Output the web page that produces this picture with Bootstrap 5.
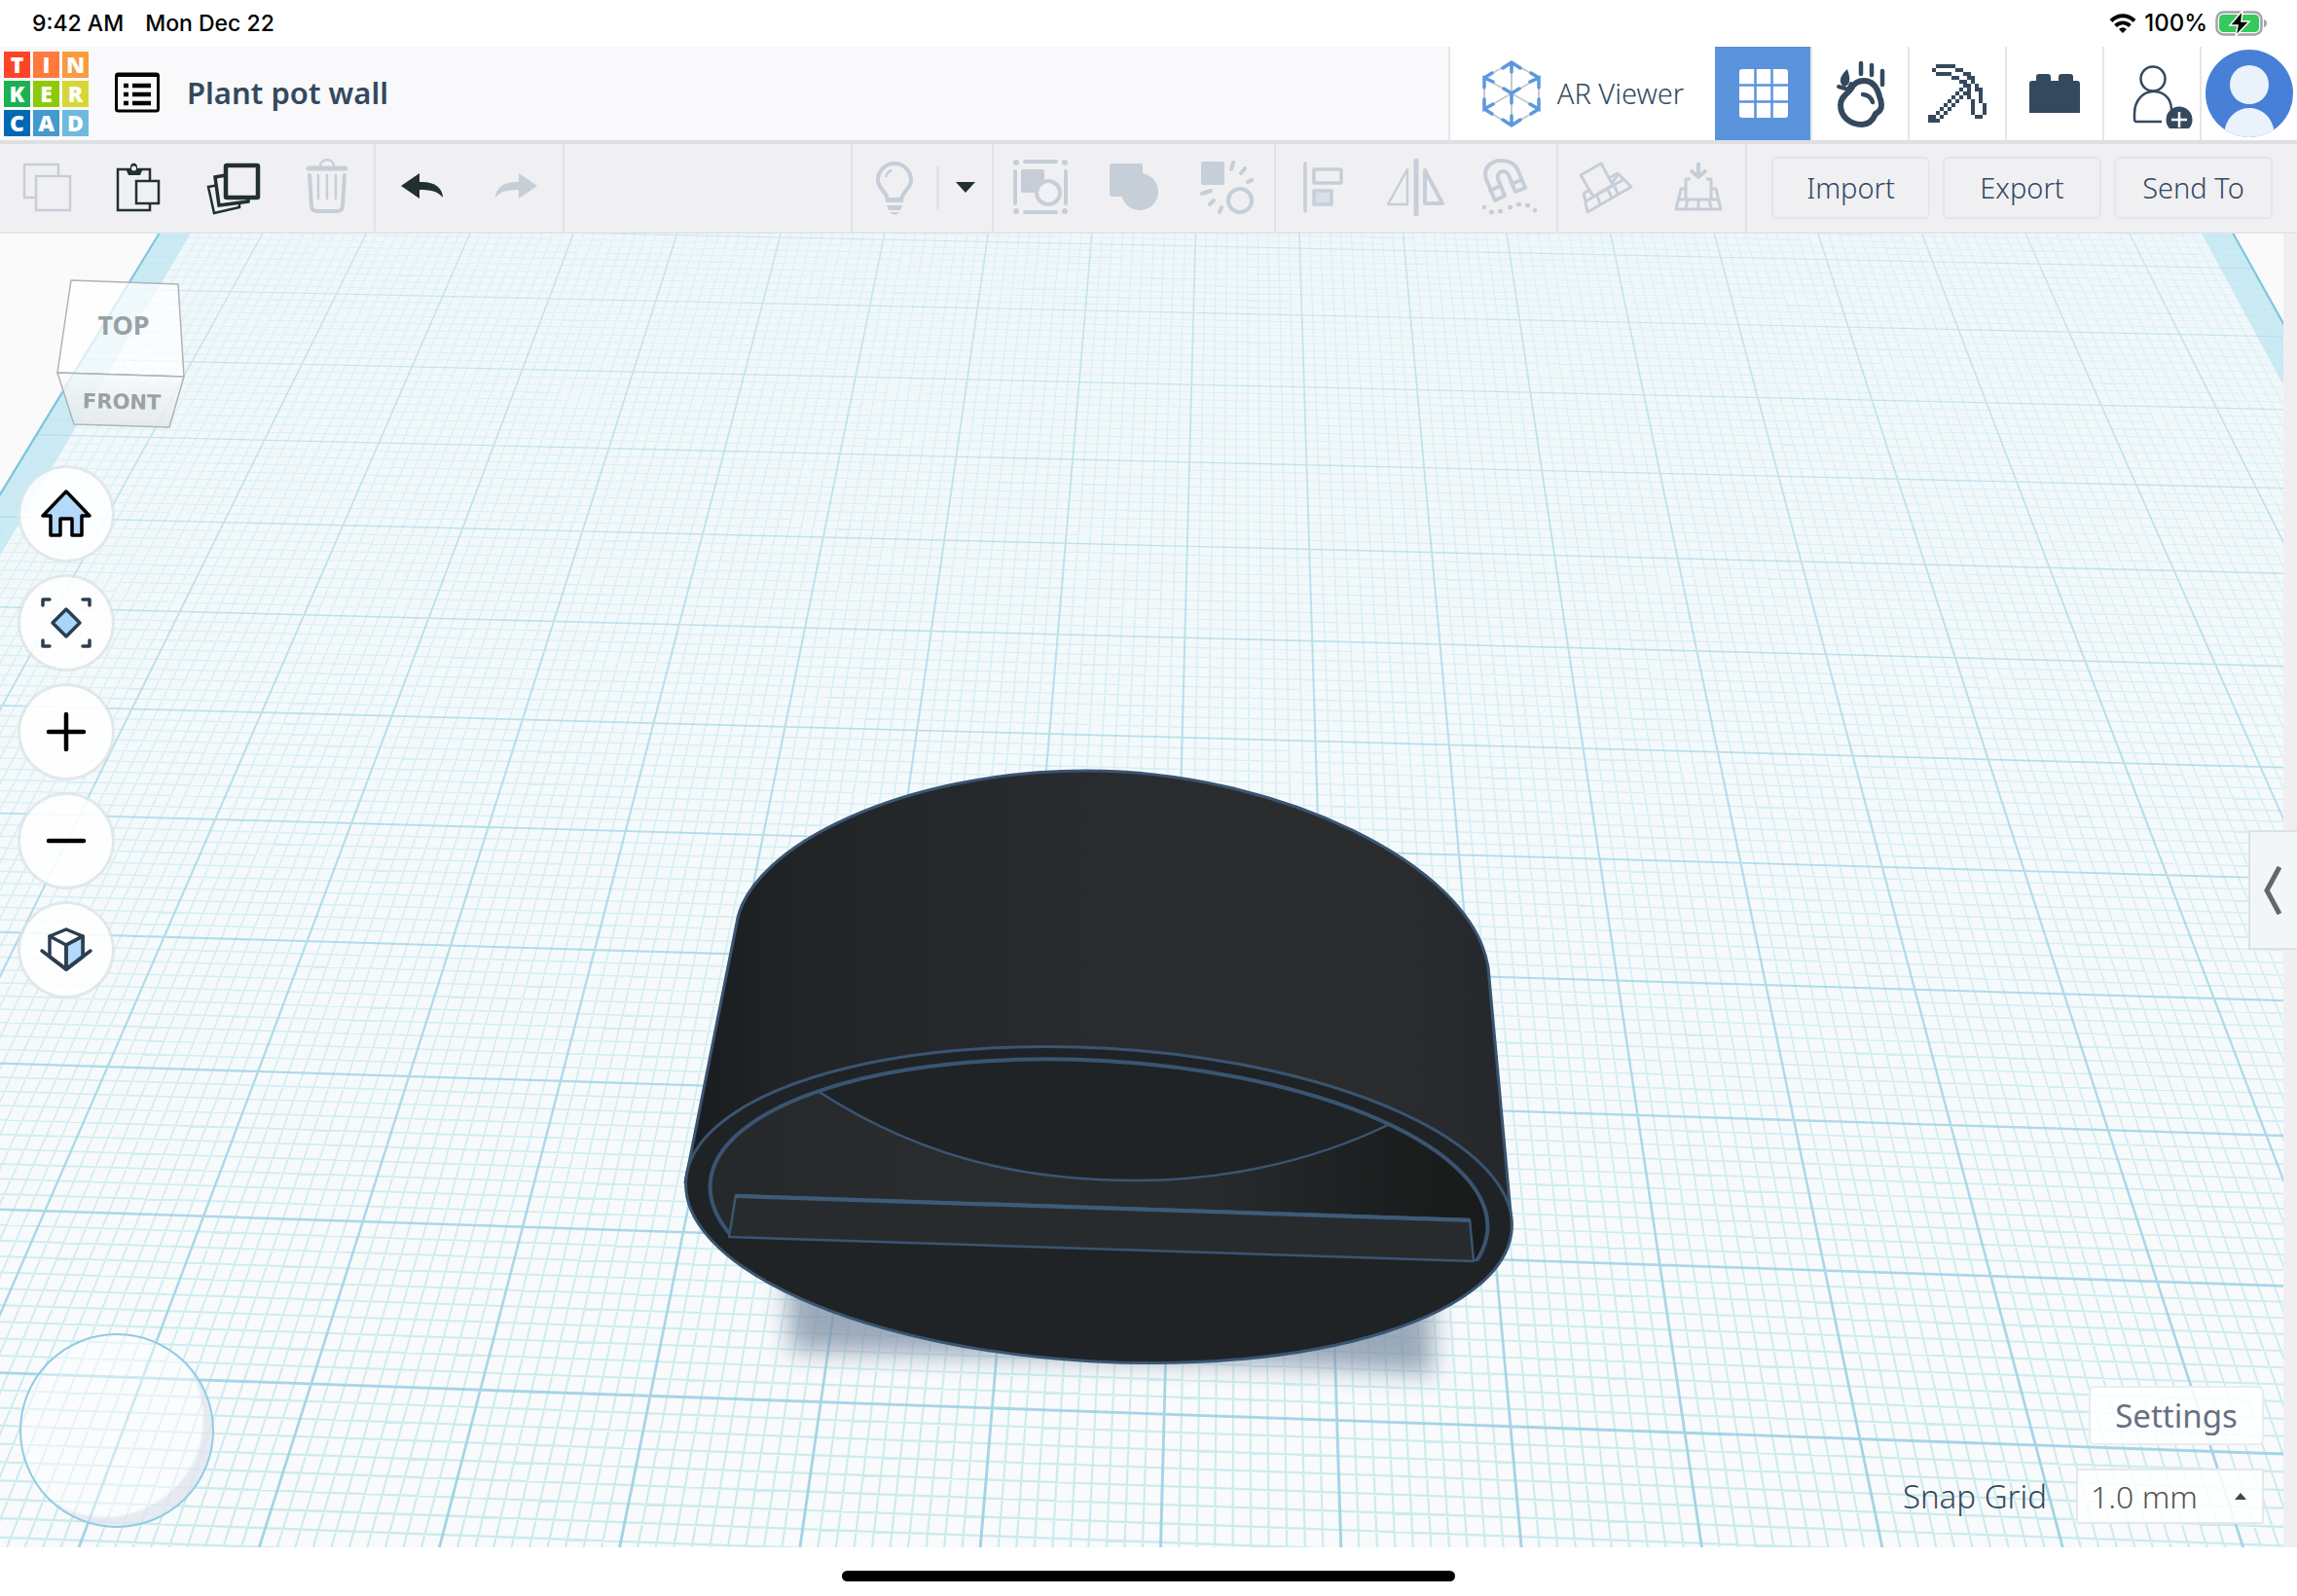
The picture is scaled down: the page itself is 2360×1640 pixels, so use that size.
<!DOCTYPE html>
<html lang="en">
<head>
<meta charset="utf-8">
<meta name="viewport" content="width=device-width, initial-scale=1">
<title>Plant pot wall | Tinkercad</title>
<link href="https://cdn.jsdelivr.net/npm/bootstrap@5.3.0/dist/css/bootstrap.min.css" rel="stylesheet">
<style>
:root{--ink:#34495e;--dark:#22302f;--off:#c6ced8;--bar:#f0f0f3;--line:#dfe2e6}
body{font-family:"Noto Sans","Open Sans",sans-serif;color:var(--ink);background:#fff;overflow:hidden}
svg{display:block;flex:none}
button{background:none;border:0;padding:0;color:inherit}
.status{height:48px;padding:0 30px 0 33px;font:500 23px/32px Inter,sans-serif;color:#000;gap:22px}
.status .power{font-size:24px}
.topbar{height:96px;background:#f9f9fb}
.logo{display:grid;grid-template-columns:repeat(3,27px);grid-template-rows:repeat(3,27px);gap:3px;margin-left:4px;text-decoration:none}
.logo span{color:#fff;font:800 23px/27px "Open Sans",sans-serif;text-align:center}
.design-name{font-size:31px;font-weight:600;line-height:40px;margin:0 0 2px 28px}
.menu-btn{margin:0 0 2px 27px}
.tile{width:100px;height:96px;background:#fff;border-left:2px solid #e4e6ea;display:flex;align-items:center;justify-content:center}
.tile.ar{width:274px;gap:16px;font-size:29px;font-weight:300}
.tile.on{width:98px;background:#5b93dc;border-color:#5b93dc}
.tools{height:96px;background:var(--bar);border-top:4px solid #dedfe3;border-bottom:2px solid #e1e5e9}
.tool-group{border-right:2px solid var(--line);height:100%}
.tool{width:96px;height:100%;display:flex;align-items:center;justify-content:center;color:var(--dark)}
.tool:disabled{color:var(--off)}
.spacer{min-width:0}
.action{width:163px;height:64px;border:2px solid #e3e6ea;border-radius:6px;font-size:29px;font-weight:300;line-height:36px}
.actions{gap:13px;padding:0 25px}
.rail{width:14px;background:#efeff2}
.cube{position:absolute;left:54px;top:44px}
.cube text{font-family:"DejaVu Sans",sans-serif;font-weight:700;fill:#98a1a6;text-anchor:middle}
.cube .face-top{font-family:"Noto Sans",sans-serif;font-size:27px}
.cube .face-front{font-size:21px}
.nav-stack{position:absolute;left:18px;top:238px;gap:12px}
.round{width:100px;height:100px;border-radius:50%;background:rgba(255,255,255,.86);border:3px solid rgba(222,228,231,.8);background-clip:padding-box;display:flex;align-items:center;justify-content:center}
.stick{position:absolute;left:20px;bottom:20px;width:200px;height:200px;border-radius:50%;border:2px solid #92cbe3;background:rgba(255,255,255,.45);box-shadow:inset -12px -12px 2px -3px rgba(212,218,230,.5)}
.corner{position:absolute;right:34px;bottom:24px;gap:24px;font-size:33px;font-weight:300;line-height:40px}
.settings{width:180px;height:61px;background:rgba(255,255,255,.86);border:2px solid #e9edf0;border-radius:6px;color:#667080}
.snap{gap:30px}
.snap-box{position:relative}
.snap-box select{appearance:none;width:193px;height:57px;border:2px solid #e4e8eb;border-radius:2px;background:rgba(255,255,255,.86);padding:0 13px;color:#555;font-size:32px;font-weight:300}
.snap-box svg{position:absolute;right:18px;top:25px;pointer-events:none}
.drawer{position:absolute;right:0;top:613px;width:50px;height:123px;background:#f2f6f8;border:2px solid #dbe1e5;border-right:0;display:flex;align-items:center;justify-content:center}
.home-bar{height:50px;background:#fff;padding-top:9px}
.home-bar span{width:630px;height:11px;border-radius:6px;background:#000}
</style>
<script src="https://cdn.jsdelivr.net/npm/bootstrap@5.3.0/dist/js/bootstrap.bundle.min.js"></script>
</head>
<body class="d-flex flex-column vh-100">
<div class="status d-flex align-items-center flex-shrink-0">
  <span>9:42 AM</span><span>Mon Dec 22</span>
  <div class="power ms-auto d-flex align-items-center gap-2">
    <svg width="28" height="22" viewBox="0 0 28 22" fill="none" stroke="#000" stroke-width="4"><path d="M2 8.500C9 1.500 19 1.500 26 8.500M6.500 13.500C11 9.500 17 9.500 21.500 13.500"/><path d="M14 21L10 17Q14 13.500 18 17Z" fill="#000" stroke="none"/></svg>
    <span>100%</span>
    <svg width="54" height="26" viewBox="0 0 54 26"><rect x="1.500" y="1.500" width="46" height="23" rx="7" fill="none" stroke="#a2a4a6" stroke-width="2.500"/><path d="M50 9Q53 10 53 13T50 17Z" fill="#a2a4a6"/><rect x="4" y="4" width="41" height="18" rx="4.500" fill="#35ca5b"/><path d="M28 0L15 15H23L21 26L35 11H27Z" fill="#000" stroke="#fff" stroke-width="1.500"/></svg>
  </div>
</div>

<header class="topbar d-flex align-items-center flex-shrink-0">
  <a class="logo" href="#" aria-label="Tinkercad">
    <span style="background:#fc4528">T</span><span style="background:#ff7a3c">I</span><span style="background:#f79c3f">N</span>
    <span style="background:#1bb052">K</span><span style="background:#8dca08">E</span><span style="background:#d6d736">R</span>
    <span style="background:#0268b6">C</span><span style="background:#4499cd">A</span><span style="background:#6db9df">D</span>
  </a>
  <button class="menu-btn" aria-label="Designs"><svg width="46" height="42" viewBox="0 0 46 42"><rect x="1.500" y="2" width="43" height="38" rx="2" fill="none" stroke="#000" stroke-width="3"/><path d="M1 1H45V5H1Z"/><path d="M9 14h5M18 14h19M9 23h5M18 23h19M9 32h5M18 32h19" stroke="#000" stroke-width="4.500"/></svg></button>
  <h1 class="design-name">Plant pot wall</h1>
  <nav class="d-flex ms-auto">
    <button class="tile ar">
      <svg width="62" height="72" viewBox="3 0 62 72" fill="none"><path d="M34 4L6 20V52L34 69L62 52V20ZM34 4V69M6 20L62 52M62 20L6 52" stroke="#c9c9cb" stroke-width="2"/><path d="M25 10L34 4L43 10M34 4V14M25 63L34 69L43 63M34 69V59M6 30V20L15 24M6 20L14 15M6 42V52L15 47M6 52L14 57M62 30V20L53 24M62 20L54 15M62 42V52L53 47M62 52L54 57M26 31L34 36L42 31M34 36V46" stroke="#5c98df" stroke-width="3.500" stroke-linecap="round"/></svg>
      <span>AR Viewer</span>
    </button>
    <button class="tile on" aria-label="3D editor"><svg width="50" height="50" viewBox="0 0 50 50"><rect width="50" height="50" rx="3" fill="#fff"/><path d="M16.500 0V50M33.500 0V50M0 16.500H50M0 33.500H50" stroke="#5b93dc" stroke-width="2.500"/></svg></button>
    <button class="tile" aria-label="Simulation"><svg width="58" height="72" viewBox="-4 0 58 72" fill="none" stroke="#34495e" stroke-linecap="round"><path d="M29 23C39 23 43 31 45 39C49 49 47 54 41 57C38 64 34 68 27 68C14 68 5 59 5 48C5 39 13 36 16 31C19 25 23 23 29 23Z" stroke-width="6"/><path d="M26 5V16M37 7V17M48 13V27" stroke-width="4.500"/><path d="M28 37Q36 38 38 45" stroke-width="4.500"/><path d="M12 11Q0 22 8 29Q18 28 12 11Z" fill="#34495e" stroke="none"/><path d="M3 29L13 32L16 26" stroke-width="4"/></svg></button>
    <button class="tile" aria-label="Blocks"><svg id="pickaxe" width="60" height="60" viewBox="0 0 15 15" fill="#34495e" shape-rendering="crispEdges"></svg></button>
    <button class="tile" aria-label="Bricks"><svg width="52" height="40" viewBox="0 0 52 40" fill="#34495e"><path d="M0 10Q0 7 3 7H7V3Q7 0 10 0H19Q22 0 22 3V7H30V3Q30 0 33 0H42Q45 0 45 3V7H49Q52 7 52 10V40H0Z"/></svg></button>
    <button class="tile" aria-label="Invite people"><svg width="84" height="72" viewBox="-21 -3 84 72" fill="none" stroke="#34495e" stroke-width="2.500"><circle cx="22" cy="18" r="12.500"/><path d="M31 62H5Q3 62 3 59V54C3 24 41 24 41 50"/><circle cx="49" cy="60" r="13.500" fill="#34495e" stroke="none"/><path d="M49 52V68M41 60H57" stroke="#fff"/></svg></button>
    <button class="tile" aria-label="Account"><svg width="90" height="90" viewBox="0 0 90 90"><clipPath id="disc"><circle cx="45" cy="45" r="45"/></clipPath><g clip-path="url(#disc)"><path fill="#4880d7" d="M0 0H90V90H0Z"/><g fill="#eaf2fc"><circle cx="45" cy="36" r="20"/><path d="M19 90C19 50 71 50 71 90Z"/></g></g></svg></button>
  </nav>
</header>

<div class="tools d-flex flex-shrink-0" role="toolbar" aria-label="Editing">
  <div class="tool-group d-flex">
    <button class="tool" disabled aria-label="Copy"><svg width="60" height="60" fill="#f0f0f3" stroke="currentColor" stroke-width="2.500"><path d="M7 6H42V40H7Z"/><path d="M19 18H54V53H19Z"/></svg></button>
    <button class="tool" aria-label="Paste"><svg width="60" height="60" viewBox="-2 0 60 60" fill="#f0f0f3" stroke="currentColor" stroke-width="2.500"><path d="M5 11H38V53H5Z"/><path d="M13 10H18C17 3 26 3 25 10H31L28 17H16Z" fill="currentColor" stroke="none"/><circle cx="21.500" cy="10" r="2.500" stroke="none"/><path d="M24 23H47V46H24Z"/></svg></button>
    <button class="tool" aria-label="Duplicate"><svg width="60" height="60" fill="#f0f0f3" stroke="currentColor"><path d="M15 27L4 29L10 56L36 50V44" stroke-width="2.500"/><path d="M22 17L11 19L15 48L45 44V38" stroke-width="3.500"/><rect x="22" y="7" width="33" height="33" rx="1" stroke-width="4.500"/></svg></button>
    <button class="tool" disabled aria-label="Delete"><svg width="60" height="60" fill="none" stroke="currentColor" stroke-linecap="round"><path d="M11 10H49" stroke-width="5"/><path d="M23 8C23-1 37-1 37 8" stroke-width="2.500"/><path d="M12 17L14 48Q14 54 20 54H40Q46 54 46 48L48 17" stroke-width="4"/><path d="M21 17V41M30 17V41M39 17V41" stroke-width="2.500"/></svg></button>
  </div>
  <div class="tool-group d-flex">
    <button class="tool" aria-label="Undo"><svg width="60" height="60" fill="currentColor"><path d="M8 28L27 15V24C42 23 51 30 51 40C46 34 40 32 27 32V41Z"/></svg></button>
    <button class="tool" disabled aria-label="Redo"><svg width="60" height="60" fill="currentColor"><path d="M52 28L33 15V24C18 23 9 30 9 40C14 34 20 32 33 32V41Z"/></svg></button>
  </div>
  <div class="tool-group spacer flex-grow-1"></div>
  <div class="tool-group d-flex">
    <button class="tool" style="width:86px" disabled aria-label="Show all"><svg width="60" height="60" fill="none" stroke="currentColor"><path d="M23 42C21 32 13 31 13 22A17 17 0 0 1 47 22C47 31 39 32 37 42Z" stroke-width="4"/><path d="M21 43H39" stroke-width="4"/><path d="M22 48H38L36 53H24ZM25 55H35Q30 60 25 55Z" fill="currentColor" stroke="none"/><path d="M21 19Q22 14 27 12" stroke-width="2.500"/></svg></button>
    <span class="align-self-center border-start border-3 opacity-75" style="height:44px"></span>
    <button class="tool" style="width:54px" aria-label="Visibility menu"><svg width="20" height="12" fill="currentColor"><path d="M0 0H20L10 11Z"/></svg></button>
  </div>
  <div class="tool-group d-flex">
    <button class="tool" disabled aria-label="Bounding group"><svg width="60" height="60" stroke="currentColor" fill="none" stroke-linecap="round"><g fill="currentColor" stroke="none"><circle cx="5" cy="4" r="3"/><circle cx="55" cy="4" r="3"/><circle cx="5" cy="54" r="3"/><circle cx="55" cy="54" r="3"/><rect x="10" y="11" width="24" height="24" rx="2" fill="#c8ccd9"/></g><path d="M14 3H46M14 55H46M4 13V46M56 13V46" stroke-width="4"/><circle cx="38" cy="35" r="12" fill="#eff2f6" stroke-width="4"/></svg></button>
    <button class="tool" disabled aria-label="Group"><svg width="60" height="60" fill="currentColor"><rect x="5" y="5" width="34" height="34" rx="2"/><circle cx="36" cy="34" r="19"/></svg></button>
    <button class="tool" disabled aria-label="Ungroup"><svg width="60" height="60" stroke="currentColor" fill="none" stroke-width="4" stroke-linecap="round"><rect x="3" y="3" width="24" height="24" rx="2" fill="currentColor" stroke="none"/><circle cx="43" cy="43" r="12"/><path d="M36 4L34 11M48 10L44 15M55 22L51 24M4 36L13 33M16 43L12 47M24 50L22 55"/></svg></button>
  </div>
  <div class="tool-group d-flex">
    <button class="tool" disabled aria-label="Align"><svg width="60" height="60" stroke="currentColor" fill="none" stroke-width="3.500" stroke-linejoin="round"><path d="M12 5V54" stroke-linecap="round"/><path d="M21 11H49V25H21Z"/><path d="M21 33H39V47H21Z" fill="#d8dfe8"/></svg></button>
    <button class="tool" disabled aria-label="Mirror"><svg width="60" height="60" stroke="currentColor" fill="none" stroke-linejoin="round"><path d="M21 11V47H1Z" stroke-width="2.500"/><path d="M30 2V57" stroke-width="5" stroke-linecap="round"/><path d="M39 12V46H57Z" stroke-width="4"/></svg></button>
    <button class="tool" disabled aria-label="Cruise"><svg width="60" height="60" stroke="currentColor" fill="none" stroke-width="4" stroke-linejoin="round" stroke-linecap="round"><path d="M15 43L6 21C2 9 12 2 21 2C31 2 37 7 39 13L46 30L36 34L29 17C26 10 16 13 18 21L25 38ZM10 33L20 28M32 26L42 22"/><path d="M4 50h0M11 55h1M20 54h1M30 50h1M39 47h1M48 48h1M56 53h0" stroke-width="4.500"/></svg></button>
  </div>
  <div class="tool-group d-flex">
    <button class="tool" disabled aria-label="Workplane"><svg width="60" height="60" stroke="currentColor" fill="none" stroke-width="3" stroke-linejoin="round"><path d="M26 5L5 17L18 39L38 27ZM8 35L12 55L57 29L43 15L34 20M8 35L14 33M10 44L48 22M22 38L25 47M33 32L37 40M43 17L38 24L43 36"/></svg></button>
    <button class="tool" disabled aria-label="Drop to workplane"><svg width="60" height="60" stroke="currentColor" fill="none" stroke-width="3" stroke-linejoin="round"><path d="M30 4V18M22 12L30 19L38 12" stroke-width="4"/><path d="M22 21H17V42H43V21H38M17 31H12L7 52H53L48 31H43M10 42H17M43 42H50M19 42L17 51M30 42V51M41 42L43 51"/></svg></button>
  </div>
  <div class="actions d-flex align-items-center">
    <button class="action">Import</button><button class="action">Export</button><button class="action">Send To</button>
  </div>
</div>

<main class="d-flex flex-grow-1 position-relative overflow-hidden">
  <div class="flex-grow-1 position-relative">
    <svg id="scene" class="position-absolute w-100 h-100" viewBox="0 240 2346 1350" preserveAspectRatio="xMidYMid slice" role="img" aria-label="Workplane with pot">
      <defs>
        <linearGradient id="haze" x1="0" x2="0" y1="240" y2="1590" gradientUnits="userSpaceOnUse"><stop stop-color="#e9f5f9" stop-opacity=".6"/><stop offset=".45" stop-color="#f0f8fb" stop-opacity=".4"/><stop offset="1" stop-color="#fafbfc" stop-opacity=".1"/></linearGradient>
        <linearGradient id="fade" x1="0" x2="0" y1="240" y2="1590" gradientUnits="userSpaceOnUse"><stop stop-color="#a9d8e6" stop-opacity=".55"/><stop offset=".5" stop-color="#a3d5e6" stop-opacity=".8"/><stop offset="1" stop-color="#9ed1e4" stop-opacity=".95"/></linearGradient>
        <linearGradient id="wall"><stop stop-color="#181c1e"/><stop offset=".12" stop-color="#202427"/><stop offset=".3" stop-color="#25282b"/><stop offset=".5" stop-color="#292c2e"/><stop offset=".85" stop-color="#2a2c2e"/><stop offset="1" stop-color="#25282b"/></linearGradient>
        <linearGradient id="bore"><stop stop-color="#25282a"/><stop offset=".35" stop-color="#2a2c2e"/><stop offset=".65" stop-color="#272a2c"/><stop offset=".85" stop-color="#1b1e1e"/><stop offset="1" stop-color="#181a1a"/></linearGradient>
        <filter id="soft" x="-10%" y="-50%" width="120%" height="200%"><feGaussianBlur stdDeviation="12"/></filter>
        <clipPath id="above"><path d="M600 1000H1700V1302L1514 1296L749 1271L600 1266Z"/></clipPath>
        <clipPath id="hole"><ellipse cx="1129" cy="1240" rx="400" ry="150" transform="rotate(3.4 1129 1240)"/></clipPath>
      </defs>
      <rect y="240" width="2346" height="1350" fill="#fafafa"/>
      <path id="plane" fill="#f8fafb"/>
      <path id="minor" fill="#c6e9ed"/>
      <path id="haze-plane" fill="url(#haze)"/>
      <path id="band" fill="#b5e2f1" fill-opacity=".62"/>
      <path id="major" fill="url(#fade)"/>
      <path id="edge" fill="#7cc6de"/>
      <path d="M808 1300L1472 1330L1472 1412L1300 1402L812 1388Z" fill="#7d8fa5" opacity=".75" filter="url(#soft)"/>
      <g stroke="#3a5571" stroke-width="3" stroke-linejoin="round">
        <path d="M704 1215L757 948C770 869 930 792 1116 792C1310 792 1512 887 1529 994L1553 1257Z" fill="url(#wall)"/>
        <ellipse cx="1129" cy="1238" rx="425" ry="161" transform="rotate(3.300 1129 1238)" fill="#1f2326"/>
        <g clip-path="url(#above)"><g clip-path="url(#hole)" stroke-width="2.500">
          <rect x="700" y="1060" width="860" height="260" fill="url(#bore)" stroke="none"/>
          <path d="M815 1104C935 1190 1050 1213 1168 1213C1270 1213 1365 1188 1440 1149L1400 1040H800Z" fill="#1f2326"/>
        </g>
        <ellipse cx="1129" cy="1240" rx="400" ry="150" transform="rotate(3.400 1129 1240)" fill="none" stroke-width="4"/></g>
        <path d="M756 1228L1510 1253L1514 1296L749 1271Z" fill="#282b2d" stroke-width="2.500"/>
        <path d="M756 1229L1510 1254" stroke="#3d5c7b" stroke-width="4"/>
      </g>
    </svg>
    <button class="cube" aria-label="View cube"><svg width="140" height="160" viewBox="54 284 140 160"><defs><linearGradient id="face" x1="0" x2="0" y1="0" y2="1"><stop stop-color="#fbfcfc"/><stop offset="1" stop-color="#e3e7e8"/></linearGradient></defs><g stroke="#adb4b7" stroke-width="1.500" stroke-linejoin="round"><path d="M73 288L183 292L189 387L59 383Z" fill="#fff" fill-opacity=".7"/><path d="M59 383L189 387L174 439L76 436Z" fill="url(#face)" fill-opacity=".8"/></g><text class="face-top" x="127" y="344">TOP</text><text class="face-front" x="125" y="420" transform="rotate(1 125 420)">FRONT</text></svg></button>
    <div class="nav-stack d-flex flex-column">
      <button class="round" aria-label="Home view"><svg width="56" height="56" fill="#b3dafb" stroke="#000" stroke-width="3.500" stroke-linejoin="round"><path d="M28 5L4 30H12V50H22V33H34V50H44V30H52Z"/></svg></button>
      <button class="round" aria-label="Fit view"><svg width="56" height="56" fill="none" stroke="#2c3e50" stroke-width="3.500" stroke-linecap="round" stroke-linejoin="round"><path d="M28 14L42 28L28 42L14 28Z" fill="#a9d5fb"/><path d="M4 10V4H11M45 4H52V10M4 46V52H11M45 52H52V46"/></svg></button>
      <button class="round" aria-label="Zoom in"><svg width="56" height="56" stroke="#000" stroke-width="4.500" stroke-linecap="round"><path d="M10 28H46M28 10V46"/></svg></button>
      <button class="round" aria-label="Zoom out"><svg width="56" height="56" stroke="#000" stroke-width="4.500" stroke-linecap="round"><path d="M10 28H46"/></svg></button>
      <button class="round" aria-label="Orthographic view"><svg width="56" height="56" viewBox="0 -2 56 56" fill="#fff" stroke="#2c3e50" stroke-width="3.500" stroke-linecap="round" stroke-linejoin="round"><path d="M28 5L45 12V33L28 46L11 33V12Z"/><path d="M28 21L45 12V33L28 46Z" fill="#b3dafb"/><path d="M11 12L28 21L45 12M28 21V46" fill="none"/><path d="M3 27L28 46L53 27" fill="none"/></svg></button>
    </div>
    <div class="stick"></div>
  </div>
  <div class="rail"></div>
  <button class="drawer" aria-label="Open shapes panel"><svg width="22" height="54" fill="none" stroke="#666" stroke-width="5"><path d="M17 3L4 27L17 51"/></svg></button>
  <div class="corner d-flex flex-column align-items-end">
    <button class="settings">Settings</button>
    <div class="snap d-flex align-items-center">
      <label for="snap">Snap Grid</label>
      <div class="snap-box"><select id="snap"><option>1.0 mm</option></select><svg width="12" height="7"><path d="M0 7L6 0L12 7Z" fill="#444"/></svg></div>
    </div>
  </div>
</main>
<footer class="home-bar d-flex align-items-center justify-content-center flex-shrink-0"><span></span></footer>

<script>
// Perspective map of the workplane: u = 0..20 across, v grows away from the viewer.
const quad = [[319.7,1422],[2091.4,1485],[1827.4,489.3],[625.5,460.7]];
const [[x0,y0],[x1,y1],[x2,y2],[x3,y3]] = quad;
const dx1=x1-x2, dx2=x3-x2, sx=x0-x1+x2-x3, dy1=y1-y2, dy2=y3-y2, sy=y0-y1+y2-y3;
const det=dx1*dy2-dx2*dy1, g=(sx*dy2-dx2*sy)/det, h=(dx1*sy-sx*dy1)/det;
function pt(u,v){
  const s=(u-5)/10, t=v/8, w=g*s+h*t+1;
  return (((x1-x0+g*x1)*s+(x3-x0+h*x3)*t+x0)/w).toFixed(2)+' '+(((y1-y0+g*y1)*s+(y3-y0+h*y3)*t+y0)/w).toFixed(2);
}
const strip=(a,b,c,d)=>`M${pt(a,c)}L${pt(b,c)}L${pt(b,d)}L${pt(a,d)}Z`;
const near=-3, far=17;
function lines(step,skip,w){
  let d='';
  for(let i=0;i<=20*step;i++) if(!skip||i%step) d+=strip(i/step-w,i/step+w,near,far);
  for(let j=near*step;j<=far*step;j++) if(!skip||j%step) d+=strip(0,20,j/step-w,j/step+w);
  return d;
}
const set=(id,d)=>document.getElementById(id).setAttribute('d',d);
set('plane',strip(0,20,near,far));
set('haze-plane',strip(0,20,near,far));
set('minor',lines(10,true,.006));
set('major',lines(1,false,.008));
set('band',strip(0,.3,near,far)+strip(19.7,20,near,far));
set('edge',strip(-.01,.012,near,far)+strip(19.988,20.01,near,far));

// Pixel-art pickaxe
const rows=['..#####........','.#.....##......','..####...##....','......##..##...','........##.#...','.........##.#..','........#.#.##.','.......#.##..#.','......#.#.#..#.','.....#.#...#.#.','....#.#....#..#','...#.#.....#..#','..#.#......#..#','##.#........##.','###............'];
document.getElementById('pickaxe').innerHTML='<path d="'+rows.map((r,y)=>[...r].map((c,x)=>c==='#'?`M${x} ${y}h1v1h-1z`:'').join('')).join('')+'"/>';
</script>
</body>
</html>
